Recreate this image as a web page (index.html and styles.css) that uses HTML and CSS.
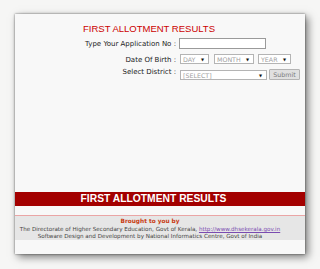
FILE: index.html
```html
<!DOCTYPE html>
<html>
<head>
<meta charset="utf-8">
<link rel="stylesheet" href="styles.css">
</head>
<body>
<div class="card">
  <h1 class="title">FIRST ALLOTMENT RESULTS</h1>
  <div class="row row1">
    <span class="label">Type Your Application No :</span>
    <span class="input"></span>
  </div>
  <div class="row row2">
    <span class="label">Date Of Birth :</span>
    <span class="sel sel-day"><span>DAY</span><i>▼</i></span>
    <span class="sel sel-month"><span>MONTH</span><i>▼</i></span>
    <span class="sel sel-year"><span>YEAR</span><i>▼</i></span>
  </div>
  <div class="row row3">
    <span class="label">Select District :</span>
    <span class="sel sel-district"><span>[SELECT]</span><i>▼</i></span>
    <span class="btn">Submit</span>
  </div>
  <div class="spacer"></div>
  <div class="bar">FIRST ALLOTMENT RESULTS</div>
  <div class="footer">
    <div class="by">Brought to you by</div>
    <div class="line">The Directorate of Higher Secondary Education, Govt of Kerala, <a href="#">http://www.dhsekerala.gov.in</a></div>
    <div class="line">Software Design and Development by National Informatics Centre, Govt of India</div>
  </div>
</div>
</body>
</html>
```
FILE: styles.css
```css
html, body {
  margin: 0;
  padding: 0;
}
body {
  background: #f6f6f5;
  width: 320px;
  height: 269px;
  overflow: hidden;
  padding-top: 14px;
  box-sizing: border-box;
}
.card {
  margin-left: 15px;
  width: 290px;
  height: 240px;
  background: #f8f8f8;
  box-shadow: 0 0 2px rgba(0,0,0,0.55), 3px 3px 8px rgba(0,0,0,0.5);
  display: flex;
  flex-direction: column;
  padding-top: 9px;
  box-sizing: border-box;
}
.title {
  margin: 0;
  padding-left: 68px;
  font-family: "Liberation Sans", Arial, sans-serif;
  font-weight: normal;
  font-size: 9.5px;
  line-height: 11px;
  color: #cc0000;
}
.row {
  display: flex;
  align-items: center;
}
.label {
  width: 161px;
  margin-right: 3px;
  text-align: right;
  font-family: "DejaVu Sans", Verdana, sans-serif;
  font-size: 7px;
  line-height: 8px;
  color: #222;
  white-space: nowrap;
}
.row1 {
  margin-top: 4px;
  height: 11px;
}
.input {
  width: 87px;
  height: 11px;
  box-sizing: border-box;
  border: 1px solid #9a9a9a;
  background: #fff;
}
.row2 {
  margin-top: 5px;
  height: 10px;
}
.row2 .label {
  margin-top: 2px;
}
.row3 {
  margin-top: 5px;
  height: 11px;
  align-items: flex-start;
}
.row3 .label {
  margin-top: -1px;
}
.sel {
  display: flex;
  align-items: center;
  justify-content: space-between;
  height: 10px;
  box-sizing: border-box;
  border: 1px solid #b4b4b4;
  background: #fff;
  padding: 0 4px 0 2px;
  font-family: "DejaVu Sans", Verdana, sans-serif;
  font-size: 6.3px;
  color: #a0a0a0;
  white-space: nowrap;
}
.sel i {
  font-style: normal;
  font-size: 4px;
  color: #111;
}
.sel-day { width: 29px; margin-left: 1px; }
.sel-month { width: 40px; margin-left: 5px; }
.sel-year { width: 33px; margin-left: 4px; }
.sel-district { width: 87px; margin-left: 1px; margin-top: 1px; }
.btn {
  width: 31px;
  height: 11px;
  margin-left: 2px;
  box-sizing: border-box;
  border: 1px solid #b4b4b4;
  border-radius: 1px;
  background: #e0e0e0;
  font-family: "DejaVu Sans", Verdana, sans-serif;
  font-size: 6.3px;
  line-height: 9px;
  color: #7a7a7a;
  text-align: center;
}
.spacer {
  flex: 1;
}
.bar {
  height: 14px;
  background: #a30000;
  color: #fff;
  font-family: "Liberation Sans", Arial, sans-serif;
  font-weight: bold;
  font-size: 10.3px;
  line-height: 14px;
  text-align: center;
  padding-right: 13px;
}
.footer {
  margin-top: 9px;
  margin-bottom: 14px;
  border-top: 1px solid #eaa5a5;
  background: #e6e6e6;
  height: 25px;
  box-sizing: border-box;
  padding-right: 20px;
  text-align: center;
  font-family: "DejaVu Sans", Verdana, sans-serif;
  font-size: 5.6px;
  color: #444;
}
.by {
  font-weight: bold;
  color: #c83a10;
  font-size: 5.8px;
  line-height: 10px;
}
.line {
  line-height: 7px;
  white-space: nowrap;
}
.line a {
  color: #7a4bb0;
  text-decoration: underline;
}
```
